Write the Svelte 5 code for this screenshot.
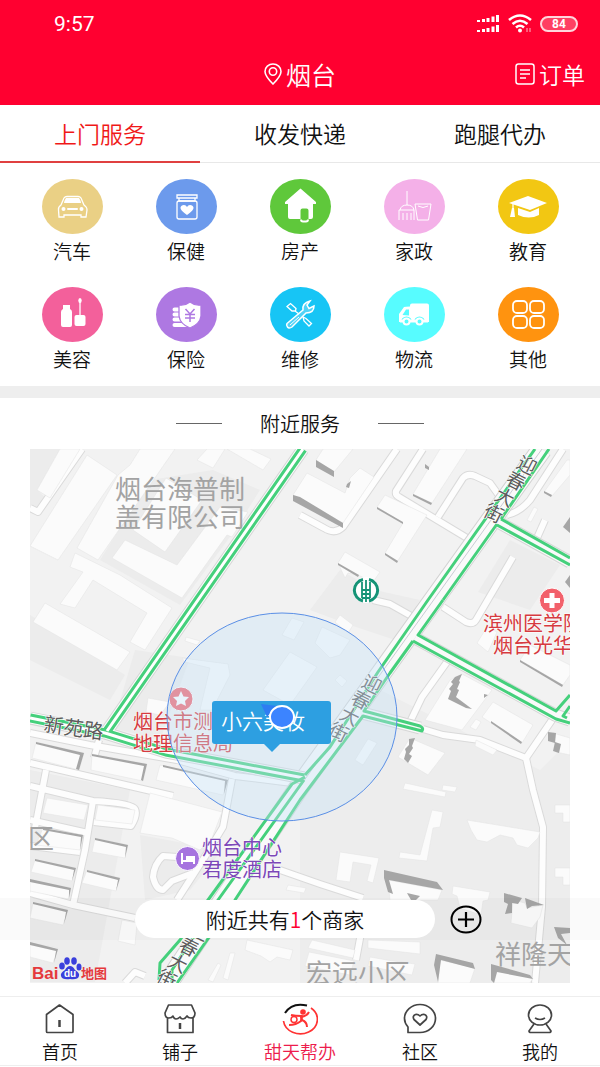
<script lang="ts">
  const tabs = ['上门服务', '收发快递', '跑腿代办'];
  let activeTab = $state(0);

  const services = [
    { id: 'car', label: '汽车', color: '#ead085' },
    { id: 'health', label: '保健', color: '#6c9aec' },
    { id: 'house', label: '房产', color: '#5fc83b' },
    { id: 'clean', label: '家政', color: '#f4b0e8' },
    { id: 'school', label: '教育', color: '#f2c713' },
    { id: 'beauty', label: '美容', color: '#f3609b' },
    { id: 'insure', label: '保险', color: '#ae78e2' },
    { id: 'repair', label: '维修', color: '#17c5f5' },
    { id: 'truck', label: '物流', color: '#57fcff' },
    { id: 'other', label: '其他', color: '#ff930f' },
  ];

  const nav = [
    { id: 'home', label: '首页' },
    { id: 'shop', label: '铺子' },
    { id: 'help', label: '甜天帮办' },
    { id: 'group', label: '社区' },
    { id: 'me', label: '我的' },
  ];
  let activeNav = $state('help');

  const blocks = [
    '30,449 60,449 37,490 50,502 30,512',
    '213,470 260,490 235,530 180,605 100,560 150,480',
    '340,570 375,590 420,600 395,640 350,625 310,610',
    '30,615 125,675 110,700 30,660',
    '510,540 560,565 530,610 478,592',
    '135,650 190,658 160,740 112,728',
    '30,770 130,790 95,982 30,982',
    '140,835 222,850 190,890 145,900',
    '305,905 438,935 425,982 300,982',
  ];

  const streets = [
    'M397 449L343 527Q335 535 324 528L300 515',
    'M423 449L396 491Q395 495 399 497L467 538',
    'M438 517L463 478Q468 473 475 476L490 483L500 497',
    'M563 449L530 500Q520 512 507 515',
    'M545 520L537 538',
    'M513 557L476 620Q473 625 466 622L443 607',
    'M373 600L390 604L413 617',
    'M447 662L422 697L410 722',
    'M423 729L443 735L480 740L526 758L552 720',
    'M526 758L533 790L543 827L542 907L535 983',
    'M280 870L320 884L363 898',
    'M30 733L90 745L177 760L235 776L300 784',
    'M30 763L65 771L173 796',
    'M46 770L35 828M30 786L93 801Q132 803 135 809T131 826L94 822',
    'M99 740L94 758M93 801L85 850L73 905',
    'M30 820L88 833M30 846L80 852M30 893L73 905L135 918',
    'M232 779L223 827L206 855L177 900',
    'M177 857L163 856Q154 864 153 877Q156 890 163 890L172 881L193 873',
    'M30 508L38 512L82 449',
    'M361 933L356 960M125 983L135 972L145 976',
  ];

  const buildings = [
    '37,490 60,449 80,449 50,498',
    '87,455 117,475 58,560 30,546',
    '118,475 130,465 140,449 175,449 98,560 77,548',
    '197,460 207,449 225,449 213,468',
    '227,449 250,449 271,459 263,470',
    '133,530 166,478 202,500 165,552',
    '125,540 177,565 220,507 248,512 232,537 227,535 182,598 112,558',
    '75,553 70,567 83,572 60,604 75,608 93,580 147,613 130,642 145,650 172,608 150,594 120,575',
    '45,603 130,652 117,670 33,622',
    '186,637 200,641 197,645 185,641',
    '316,460 323,449 353,449 334,472',
    '293,495 307,473 345,493 350,478 360,468 374,477 343,523',
    '413,494 440,449 467,449 432,503',
    '377,507 385,495 427,515 397,562 385,553 403,523',
    '338,563 345,552 380,572 373,582 358,575 348,573 345,578',
    '544,492 567,460 570,460 570,475 552,496',
    '527,520 534,507 538,509 531,522',
    '520,660 530,645 570,665 570,675 563,685',
    '477,643 487,627 497,632 488,652',
    '425,720 450,680 462,674 492,690 462,730',
    '482,717 493,702 533,725 522,743',
    '470,727 476,719 481,722 476,730',
    '398,757 410,738 445,753 428,775',
    '405,783 446,792 445,797 403,789',
    '443,785 457,787 455,792 442,790',
    '476,740 497,750 493,755 475,746',
    '355,760 368,739 377,743 363,765',
    '290,652 317,667 290,705 263,690',
    '182,658 228,664 230,675 212,710 200,710 210,668 185,662',
    '282,635 292,618 304,622 294,640',
    '315,643 322,627 350,640 340,655 330,658',
    '335,622 340,615 353,625 348,633',
    '335,680 340,675 347,681 342,687',
    '148,698 170,702 160,715 146,712',
    '36,742 84,753 79,770 32,758',
    '92,754 147,764 143,781 91,770',
    '160,765 228,780 223,795 156,780',
    '47,798 88,805 84,820 43,813',
    '98,805 135,810 132,824 95,820',
    '43,828 83,835 80,850 36,845',
    '95,838 128,845 125,858 92,852',
    '35,860 76,868 72,881 31,872',
    '87,870 120,878 116,891 82,883',
    '30,880 71,888 68,899 30,891',
    '33,903 68,910 63,925 30,918',
    '30,943 58,948 53,963 30,957',
    '150,793 222,812 212,838 200,850 172,838 140,833',
    '122,920 137,923 135,945 118,941',
    '247,940 293,950 290,960 277,957 270,962 261,956 245,950',
    '230,953 235,953 228,980 223,978',
    '218,963 221,965 213,982 208,980',
    '288,885 306,888 304,893 286,890',
    '432,810 443,812 440,827 433,828 427,861 399,858 400,852 420,855',
    '467,820 540,832 538,838 528,848 517,845 513,838 500,835 487,842 477,840 471,830',
    '340,852 379,858 373,883 367,881 371,865 353,862 350,882 336,880',
    '388,880 442,890 438,900 390,900',
    '453,886 490,892 488,900 483,901 481,915 460,908 457,896 452,894',
    '513,900 525,903 527,908 543,905 540,917 532,928 511,923',
    '555,805 570,805 570,822 563,822 563,813 555,813',
    '555,868 570,868 570,885 563,885 563,877 555,877',
    '553,733 570,738 570,755 556,752',
    '440,960 475,968 470,983 438,983',
    '497,971 533,978 530,983 494,983',
    '312,940 355,950 353,958 308,948',
    '368,940 420,942 420,954 368,948',
    '370,957 387,960 415,964 412,975 368,966',
    '309,952 354,961 350,975 305,966',
  ];

  const sides = [
    '316,460 334,471 334,477 316,467',
    '293,495 300,497 343,523 343,528 293,501',
    '413,494 432,503 431,505 413,496',
    '425,464 429,467 429,470 425,468',
    '347,484 351,481 349,488 346,487',
    '377,507 403,522 403,524 377,509',
    '385,553 398,561 397,563 385,555',
    '338,563 359,575 358,577 338,565',
    '544,491 552,495 551,497 544,493',
    '563,527 570,517 570,533',
    '565,582 570,575 570,588',
    '520,660 563,685 562,687 520,662',
    '491,721 522,742 521,744 491,723',
    '484,694 488,695 484,698',
    '455,677 462,674 459,681 460,682 457,689 459,690 456,697 472,709 466,708 448,699 451,691 449,689 453,684 451,682',
    '409,739 415,738 412,746 413,748 409,754 412,756 408,763 404,759 406,752 405,749 409,745',
    '548,732 556,733 555,743 548,741',
    '555,742 561,744 559,753 553,751',
    '36,742 84,753 79,770 76,769 80,755 36,744',
    '92,754 147,764 143,781 141,780 144,766 92,756',
    '163,765 228,780 224,794 225,781 163,767',
    '43,828 83,835 80,850 81,837 43,830',
    '95,838 128,845 125,858 126,847 95,840',
    '35,859 76,868 72,881 74,870 35,861',
    '87,870 120,878 116,891 118,880 87,872',
    '30,879 71,888 69,898 69,890 30,882',
    '33,902 68,910 64,924 66,912 33,904',
    '30,942 58,949 54,963 56,951 30,945',
    '384,870 437,882 443,890 389,880 393,894 388,892 384,878',
    '407,893 420,896 416,900 411,900',
    '504,893 522,898 518,904 512,903 512,913 505,914 508,904 504,902',
    '525,898 544,905 532,906 527,909',
    '554,927 570,928 570,933 561,934 567,945 558,938',
    '436,954 473,963 475,969 441,960 438,982 434,965',
    '491,964 530,975 533,979 497,972 494,983 491,980',
  ];

  const doubleRoads = 'M303 449L198 600L107 731M30 718L105 733L166 752L304 778';
  const sideRoads = 'M498 522L570 562M415 638L555 715L570 720M362 713L420 728';

  const greens = [
    'M570 558L501 519M497 525L570 565',
    'M443 600L418 635L556 711L570 695M413 641L556 719L570 723M570 706L563 716L567 718',
    'M535 449L428 600L378 672L330 747L305 775',
    'M549 449L501 519M497 524L443 600M413 641L390 673L364 711L420 726Q424 728 422 731L363 716L300 800L235 900L177 983',
    'M305 777L292 784L208 900L180 940L160 963L159 980',
    'M304 780L218 900L172 970L172 983',
  ];

  const streetNames = [
    { chars: '迎春大街', x: 527, y: 465 },
    { chars: '迎春大街', x: 372, y: 684 },
    { chars: '迎春大街', x: 200, y: 931 },
  ];
</script>

<svelte:head>
  <title>甜天帮办</title>
</svelte:head>

<main class="page">
  <header class="header">
    <div class="status">
      <span>9:57</span>
      <div class="status-icons">
        <svg width="24" height="18" viewBox="0 0 24 18" aria-hidden="true">
          <path d="M2.500 5v2M7.500 4v3M12 3v4M17 1.500v5.500M21.500 0v7M2.500 15v2M7.500 14v3M12 13v4M17 11.500v5.500M21.500 10v7" stroke="#fff" stroke-width="3" />
        </svg>
        <svg width="24" height="20" viewBox="0 0 24 20" fill="none" stroke="#fff" aria-hidden="true">
          <path d="M1 6Q12 -3 23 6M4.500 10Q12 3.500 19.500 10M8 13.500Q12 10 16 13.500" stroke-width="2.600" />
          <circle cx="12" cy="16.500" r="2" fill="#fff" stroke="none" />
          <path d="M19 14v4M22 14v4" stroke-width="1" opacity=".7" />
        </svg>
        <span class="battery">84</span>
      </div>
    </div>
    <div class="titlebar">
      <button class="city" type="button">
        <svg width="18" height="22" viewBox="0 0 18 22" fill="none" stroke="#fff" stroke-width="1.600" aria-hidden="true">
          <path d="M9 21Q1 13 1 8.500A8 7.500 0 0 1 17 8.500Q17 13 9 21Z" />
          <circle cx="9" cy="8.500" r="3.700" />
        </svg>
        烟台
      </button>
      <a class="orders" href="#orders">
        <svg width="20" height="24" viewBox="0 0 20 24" fill="none" stroke="#fff" stroke-width="1.500" aria-hidden="true">
          <rect x="1" y="2" width="18" height="20" rx="2.500" />
          <path d="M5 8h10M5 12h10M5 16h6" />
        </svg>
        订单
      </a>
    </div>
  </header>

  <nav class="tabs">
    {#each tabs as tab, i}
      <button type="button" class:active={activeTab === i} onclick={() => (activeTab = i)}>{tab}</button>
    {/each}
  </nav>

  <section class="services">
    {#each services as item}
      <a class="service" href={`#${item.id}`}>
        <svg width="61" height="55" viewBox="0 0 61 55" fill="none" stroke="#fff" stroke-width="1.300" aria-hidden="true">
          <ellipse cx="30.500" cy="27.500" rx="30.500" ry="27.500" fill={item.color} stroke="none" />
          {#if item.id === 'car'}
            <path d="M19 26L22 19Q23 17.500 25 17.500H36Q38 17.500 39 19L42 26Q45 28 45 31L44 38H39V36H22V38H17L16.500 31Q16 28 19 26Z" />
            <path d="M24 19H37Q39 22 39 24H22Q22 22 24 19Z" fill="#fff" stroke="none" />
            <circle cx="21.500" cy="30" r="2" fill="#fff" stroke="none" />
            <circle cx="39.500" cy="30" r="2" fill="#fff" stroke="none" />
            <path d="M26 30h9" stroke-width="2" stroke-linecap="round" />
          {:else if item.id === 'health'}
            <path d="M21 16H41V19H21ZM23 19V22H39V19" />
            <rect x="21" y="22" width="20" height="18" rx="2" />
            <path d="M31 36Q24 31 24.500 28.500Q25 26 28 26Q30 26 31 28Q32 26 34 26Q37 26 37.500 28.500Q38 31 31 36Z" fill="#fff" stroke="none" />
          {:else if item.id === 'house'}
            <path d="M30.500 9.500L46 23V25H43V38Q43 40 41 40H38.500V31.500Q38.500 29.500 36.500 29.500H32.500Q30.500 29.500 30.500 31.500V40H20Q18 40 18 38V25H15V23Z" fill="#fff" stroke="none" />
            <path d="M31 40.500Q31 42.500 33 42.500H36Q38 42.500 38 40.500" stroke-width="2" />
          {:else if item.id === 'clean'}
            <path d="M23 12V26M16 31Q17 26 23 26T30 31H15V41M19 41V34M23 41V34M27 41V34M30 31V41M31 25H47L44.500 41H33.500ZM34 27Q39 30 44 27" stroke-width="1" />
          {:else if item.id === 'school'}
            <path d="M11 24L30 17L49 24L32 31Z" fill="#fff" stroke="none" />
            <path d="M20 29L32 33L41 29V36Q31 41 20 36Z" fill="#fff" stroke="none" />
            <path d="M15 25V30" />
            <path d="M14 29H16L17 38H12Z" fill="#fff" stroke="none" />
          {:else if item.id === 'beauty'}
            <path d="M21 18H28V22Q30 23 30 25V38Q30 40 28 40H21Q19 40 19 38V25Q19 23 21 22Z" fill="#fff" stroke="none" />
            <rect x="32.500" y="28" width="11" height="11" rx="2" fill="#fff" stroke="none" />
            <path d="M38 15V28" />
            <ellipse cx="38" cy="13.500" rx="1.700" ry="2.500" fill="#fff" stroke="none" />
          {:else if item.id === 'insure'}
            <path d="M18.500 22.500H25M18.500 27.500H25M18.500 32.500H25M18.500 38H30" stroke-width="4" stroke-linecap="round" />
            <path d="M34 15Q39 19 45 18V29Q44 37 34 41Q24 37 23 29V18Q29 19 34 15Z" fill="#fff" stroke={item.color} />
            <path d="M29.500 22L34 27L38.500 22M34 27V35M29 27.500H39M29 31H39" stroke={item.color} stroke-width="1.500" />
          {:else if item.id === 'repair'}
            <path d="M17 19.500L20.500 16.500L26 21.500L25.500 24H22ZM25 24L29 27M33 30L36 31.500L41.500 36.500L39 39L34 34Z" />
            <path d="M17 36.500L33 23Q32 16 40 14L37 18L39 21.500L44 19Q44 26 36 26L22 40Q19 42 17.500 40T17 36.500Z" fill="#fff" fill-opacity=".25" stroke-width="1.500" />
            <path d="M20 38L29 30" stroke-width="1" />
          {:else if item.id === 'truck'}
            <path d="M28 16.500H43Q45 16.500 45 18.500V35H41A5.500 5.500 0 0 0 30 35H28A5.500 5.500 0 0 0 17 35H15V27L20 20Q21 19.500 26 19.500V18.500Q26 16.500 28 16.500Z" fill="#fff" stroke="none" />
            <path d="M18.500 28L22 22.500H25V28.500Z" fill={item.color} stroke="none" />
            <path d="M16 34H44" stroke-width="3" />
            <circle cx="22.500" cy="34.500" r="3" fill={item.color} stroke-width="2" />
            <circle cx="35.500" cy="34.500" r="3" fill={item.color} stroke-width="2" />
          {:else}
            <g stroke-width="1.800">
              <rect x="15" y="14" width="14" height="12" rx="4" />
              <rect x="32" y="14" width="14" height="12" rx="4" />
              <rect x="15" y="29" width="14" height="12" rx="4" />
              <rect x="32" y="29" width="14" height="12" rx="4" />
            </g>
          {/if}
        </svg>
        <span>{item.label}</span>
      </a>
    {/each}
  </section>

  <section class="nearby">
    <h2>附近服务</h2>

    <div class="map-area">
      <div class="map">
        <svg class="canvas" viewBox="30 449 540 534" role="img" aria-label="附近服务地图">
          <rect x="30" y="449" width="540" height="534" fill="#f2f2f2" />
          {#each blocks as points}
            <polygon {points} fill="#ececec" />
          {/each}
          <path d="M300 800L380 690L540 770L570 740V983H300Z" fill="#ededed" />

          {#each streets as d}
            <path {d} class="edge" />
          {/each}
          {#each streets as d}
            <path {d} class="street" />
          {/each}

          {#each buildings as points}
            <polygon {points} fill="#fbfbfb" stroke="#e2e2e2" stroke-width=".5" />
          {/each}
          {#each sides as points}
            <polygon {points} fill="#a6a6a6" />
          {/each}

          <g fill="none" stroke-linejoin="round">
            <path d="M542 449L298 789L168 983" stroke="#d2d2d2" stroke-width="21" />
            <path d="M542 449L298 789L168 983" stroke="#fafafa" stroke-width="19" />
            <path d={doubleRoads + sideRoads} stroke="#d6d6d6" stroke-width="13" />
            <path d={doubleRoads + sideRoads} stroke="#fafafa" stroke-width="11" />
            <path d="M542 449L298 789" stroke="#c9ccd4" stroke-width="1" />
            <path d={doubleRoads} stroke="#45d07c" stroke-width="9" />
            <path d={doubleRoads} stroke="#fff" stroke-width="3" />
            {#each greens as d}
              <path {d} stroke="#45d07c" stroke-width="3" />
            {/each}
          </g>

          <g class="area">
            <text x="115" y="499">烟台海普制</text>
            <text x="115" y="527">盖有限公司</text>
            <text x="495" y="964">祥隆天</text>
            <text x="306" y="983">宏远小区</text>
            <text x="28" y="848">区</text>
          </g>

          <g class="road-name">
            {#each streetNames as name}
              {#each [...name.chars] as char, i}
                <text text-anchor="middle" transform={`translate(${name.x - i * 11} ${name.y + i * 16}) rotate(27)`} y="7">{char}</text>
              {/each}
            {/each}
            <text class="wide" transform="translate(43 731) rotate(8)">新苑路</text>
          </g>

          <g class="poi red">
            <circle cx="181" cy="699" r="12" />
            <path d="M181 691L183.500 696.500L189 697L185 701L186 706L181 703.500L176 706L177 701L173 697L178.500 696.500Z" fill="#fff" />
            <text x="133" y="729">烟台市测绘</text>
            <text x="133" y="751">地理信息局</text>
            <circle cx="552" cy="600.500" r="12.500" />
            <path d="M552 593V608M544 600.500H560" stroke="#fff" stroke-width="5" />
            <text x="483" y="631">滨州医学院</text>
            <text x="493" y="653">烟台光华医院</text>
          </g>

          <g class="poi purple">
            <circle cx="187.500" cy="858.500" r="12" />
            <path d="M182 853V864M182 861H194V864M194 861V857H187V860" fill="none" stroke="#fff" stroke-width="2" />
            <path d="M187 856H192Q195 857 195 861H187Z" fill="#fff" />
            <text x="202" y="855">烟台中心</text>
            <text x="202" y="877">君度酒店</text>
          </g>

          <g fill="none" stroke="#159376">
            <circle cx="366" cy="590" r="13" fill="#fff" stroke="none" />
            <path d="M363 579.500A11 11 0 0 0 363 601M369 579.500A11 11 0 0 1 369 601" stroke-width="3" />
            <path d="M366 580V602M362 582V590H370V582M362 594H370M362 598H370M362 590V598M370 590V598" stroke-width="1.800" />
          </g>

          <ellipse cx="282" cy="717" rx="115" ry="104" fill="#c6e2f6" fill-opacity=".38" stroke="#5a8fe6" stroke-width="1" />

          <g class="baidu">
            <text x="32" y="979">Bai</text>
            <g fill="#3a3fdc">
              <ellipse cx="62" cy="966" rx="2.800" ry="3.500" />
              <ellipse cx="67" cy="961" rx="2.800" ry="3.800" />
              <ellipse cx="74" cy="961" rx="2.800" ry="3.800" />
              <ellipse cx="79" cy="967" rx="2.500" ry="3.500" />
              <path d="M70 966Q73 966 75 970Q80 973 79 976Q78 980 70 979Q62 980 61 976Q60 973 65 970Q67 966 70 966Z" />
            </g>
            <text class="du" x="64" y="977">du</text>
            <text class="ditu" x="81" y="978">地图</text>
          </g>
        </svg>
        <button class="callout" type="button">小六美妆</button>
        <svg class="locator" width="36" height="28" viewBox="0 0 36 28" aria-hidden="true">
          <path d="M1 1L17 3L7 14Z" fill="#2f7df2" />
          <ellipse cx="22" cy="14" rx="12" ry="11" fill="#3c84ff" stroke="#fff" stroke-width="2" />
        </svg>
      </div>

      <div class="summary">
        <button class="count" type="button">附近共有<em>1</em>个商家</button>
        <button class="add" type="button" aria-label="添加">
          <svg width="32" height="29" viewBox="0 0 32 29" fill="none" stroke="#000" aria-hidden="true">
            <ellipse cx="16" cy="14.500" rx="14.500" ry="13" stroke-width="2" />
            <path d="M16 7V22M8 14.500H24" stroke-width="2.200" />
          </svg>
        </button>
      </div>
    </div>
  </section>

  <nav class="bottom">
    {#each nav as item}
      <button type="button" class:active={activeNav === item.id} onclick={() => (activeNav = item.id)}>
        <svg width="36" height="32" viewBox="0 0 36 32" fill="none" stroke="#444" stroke-width="1.700" stroke-linejoin="round" aria-hidden="true">
          {#if item.id === 'home'}
            <path d="M17.500 2L31 11.500V28.500Q31 29.500 30 29.500H5.500Q4.500 29.500 4.500 28.500V11.500Z" />
            <path d="M17.500 17V24" stroke-width="2.500" />
          {:else if item.id === 'shop'}
            <path d="M6.500 2H29.500L33 10Q33 15 29 15Q26 15 25 13Q23 16 21 16T18 14Q16 16 14 16T11 13Q10 15 7 15Q3 15 3 10ZM5.500 15V29.500H31V15" />
            <path d="M18 20V26" stroke-width="2.500" />
          {:else if item.id === 'help'}
            <path d="M3 10Q10 -1 25 2.500" stroke="#111" stroke-width="2" />
            <path d="M29 5A17 14.500 0 1 1 1.500 18" stroke="#f33" stroke-width="1.700" />
            <circle cx="21" cy="9" r="2.800" fill="#f33" stroke="none" />
            <path d="M27 9Q25 13 19 14L20 17Q25 19 25 24" stroke="#f33" stroke-width="2" />
            <path d="M9 12Q13 13 20 13L19 18Q14 22 7 22" stroke="#f33" stroke-width="2.200" />
            <circle cx="12" cy="16.500" r="3" stroke="#f33" stroke-width="1.500" />
          {:else if item.id === 'group'}
            <path d="M6 29.500V24Q2.500 20 2.500 15.500A15.500 14 0 1 1 18 29.500Z" />
            <path d="M18 22L12 16.500Q10 13 13.500 11.500Q16 11 18 13Q20 11 22.500 11.500Q26 13 24 16.500Z" />
          {:else}
            <ellipse cx="18" cy="12" rx="11.500" ry="10" />
            <path d="M13 15Q18 18 23 15M12 21L7 28Q7 29.500 9 29.500H27Q29 29.500 29 28L24 21" />
          {/if}
        </svg>
        <span>{item.label}</span>
      </button>
    {/each}
  </nav>
</main>

<style>
  :global(body) {
    margin: 0;
    background: #fff;
    color: #111;
    font-family: 'Noto Sans CJK SC', 'Noto Sans', sans-serif;
    font-weight: 350;
  }

  button {
    border: 0;
    padding: 0;
    background: none;
    color: inherit;
    font: inherit;
    cursor: pointer;
  }

  a {
    color: inherit;
    text-decoration: none;
  }

  svg {
    display: block;
    flex: none;
  }

  .header {
    background: #ff0030;
    color: #fff;
  }

  .status {
    display: flex;
    align-items: center;
    justify-content: space-between;
    height: 48px;
    padding: 0 22px 0 54px;
    font: 21px Roboto, sans-serif;
  }

  .status-icons {
    display: flex;
    align-items: center;
    gap: 8px;
  }

  .battery {
    width: 34px;
    border: 2px solid #ffd5dc;
    border-radius: 9px;
    background: #ff3f62;
    font-size: 12px;
    font-weight: 700;
    line-height: 12px;
    text-align: center;
  }

  .titlebar {
    display: grid;
    grid-template-columns: 1fr auto 1fr;
    align-items: center;
    height: 57px;
    box-sizing: border-box;
    padding: 0 15px 6px;
  }

  .city,
  .orders {
    display: flex;
    align-items: center;
    gap: 4px;
    line-height: 32px;
  }

  .city {
    grid-column: 2;
    font-size: 25px;
  }

  .orders {
    justify-self: end;
    font-size: 23px;
  }

  .tabs {
    display: flex;
    height: 58px;
    box-sizing: border-box;
    border-bottom: 1px solid #e8e8e8;
  }

  .tabs button {
    flex: 1;
    margin-bottom: -1px;
    border-bottom: 2px solid transparent;
    font-size: 23px;
  }

  .tabs .active {
    border-color: #e04040;
    color: #f01818;
  }

  .services {
    display: grid;
    grid-template-columns: repeat(5, 1fr);
    row-gap: 19px;
    padding: 16px 15px 10px;
    border-bottom: 12px solid #eee;
  }

  .service {
    display: flex;
    flex-direction: column;
    align-items: center;
    font-size: 19px;
    line-height: 34px;
  }

  h2 {
    display: flex;
    align-items: center;
    justify-content: center;
    gap: 38px;
    margin: 0;
    font-size: 20px;
    font-weight: 350;
    line-height: 51px;
  }

  h2::before,
  h2::after {
    content: '';
    width: 46px;
    height: 1px;
    background: #666;
  }

  .map-area {
    position: relative;
    padding: 0 30px;
  }

  .map {
    position: relative;
  }

  .canvas {
    width: 100%;
    height: auto;
  }

  .edge,
  .street {
    fill: none;
    stroke: #dadada;
    stroke-width: 8px;
    stroke-linejoin: round;
  }

  .street {
    stroke: #fdfdfd;
    stroke-width: 6px;
  }

  .area {
    fill: #a3a3a3;
    font-size: 26px;
    font-weight: 400;
  }

  .road-name {
    fill: #5c5c5c;
    stroke: #fff;
    stroke-width: 1px;
    paint-order: stroke;
    font-size: 19px;
    font-weight: 400;
  }

  .wide {
    font-size: 20px;
  }

  .poi {
    font-size: 20px;
    font-weight: 400;
  }

  .poi text {
    stroke: #fff;
    stroke-width: 1px;
    paint-order: stroke;
  }

  .red {
    fill: #d63a40;
  }

  .red circle {
    fill: #f2616b;
    stroke: #fff;
  }

  .purple {
    fill: #7c47b8;
  }

  .purple circle {
    fill: #a674df;
    stroke: #fff;
  }

  .baidu {
    fill: #e5393c;
    font-family: 'Liberation Sans', 'Noto Sans CJK SC', sans-serif;
    font-size: 17px;
    font-weight: 700;
  }

  .du {
    fill: #fff;
    font-size: 10px;
  }

  .ditu {
    font-size: 13px;
  }

  .callout {
    position: absolute;
    top: 252px;
    left: 182px;
    width: 119px;
    height: 43px;
    padding: 0 0 6px 9px;
    border-radius: 3px;
    background: #2d9fe1;
    color: #fff;
    font-size: 21px;
    text-align: left;
  }

  .callout::after {
    content: '';
    position: absolute;
    top: 100%;
    left: 52px;
    border: 8px solid transparent;
    border-top-color: #2d9fe1;
    border-bottom: 0;
  }

  .locator {
    position: absolute;
    top: 254px;
    left: 230px;
  }

  .summary {
    position: absolute;
    right: 0;
    bottom: 43px;
    left: 0;
    display: flex;
    align-items: center;
    gap: 15px;
    height: 42px;
    padding-left: 135px;
    background: rgba(0, 0, 0, 0.02);
  }

  .count {
    flex: 0 1 300px;
    border-radius: 19px;
    background: #fff;
    font-size: 21px;
    line-height: 38px;
  }

  .count em {
    color: #ff0030;
    font-style: normal;
  }

  .bottom {
    display: flex;
    margin-top: 13px;
    border-top: 1px solid #eee;
    border-bottom: 1px solid #eee;
  }

  .bottom button {
    flex: 1;
    display: flex;
    flex-direction: column;
    align-items: center;
    gap: 2px;
    padding-top: 6px;
    font-size: 18px;
    line-height: 28px;
  }

  .bottom .active {
    color: #ed1c4c;
  }
</style>
